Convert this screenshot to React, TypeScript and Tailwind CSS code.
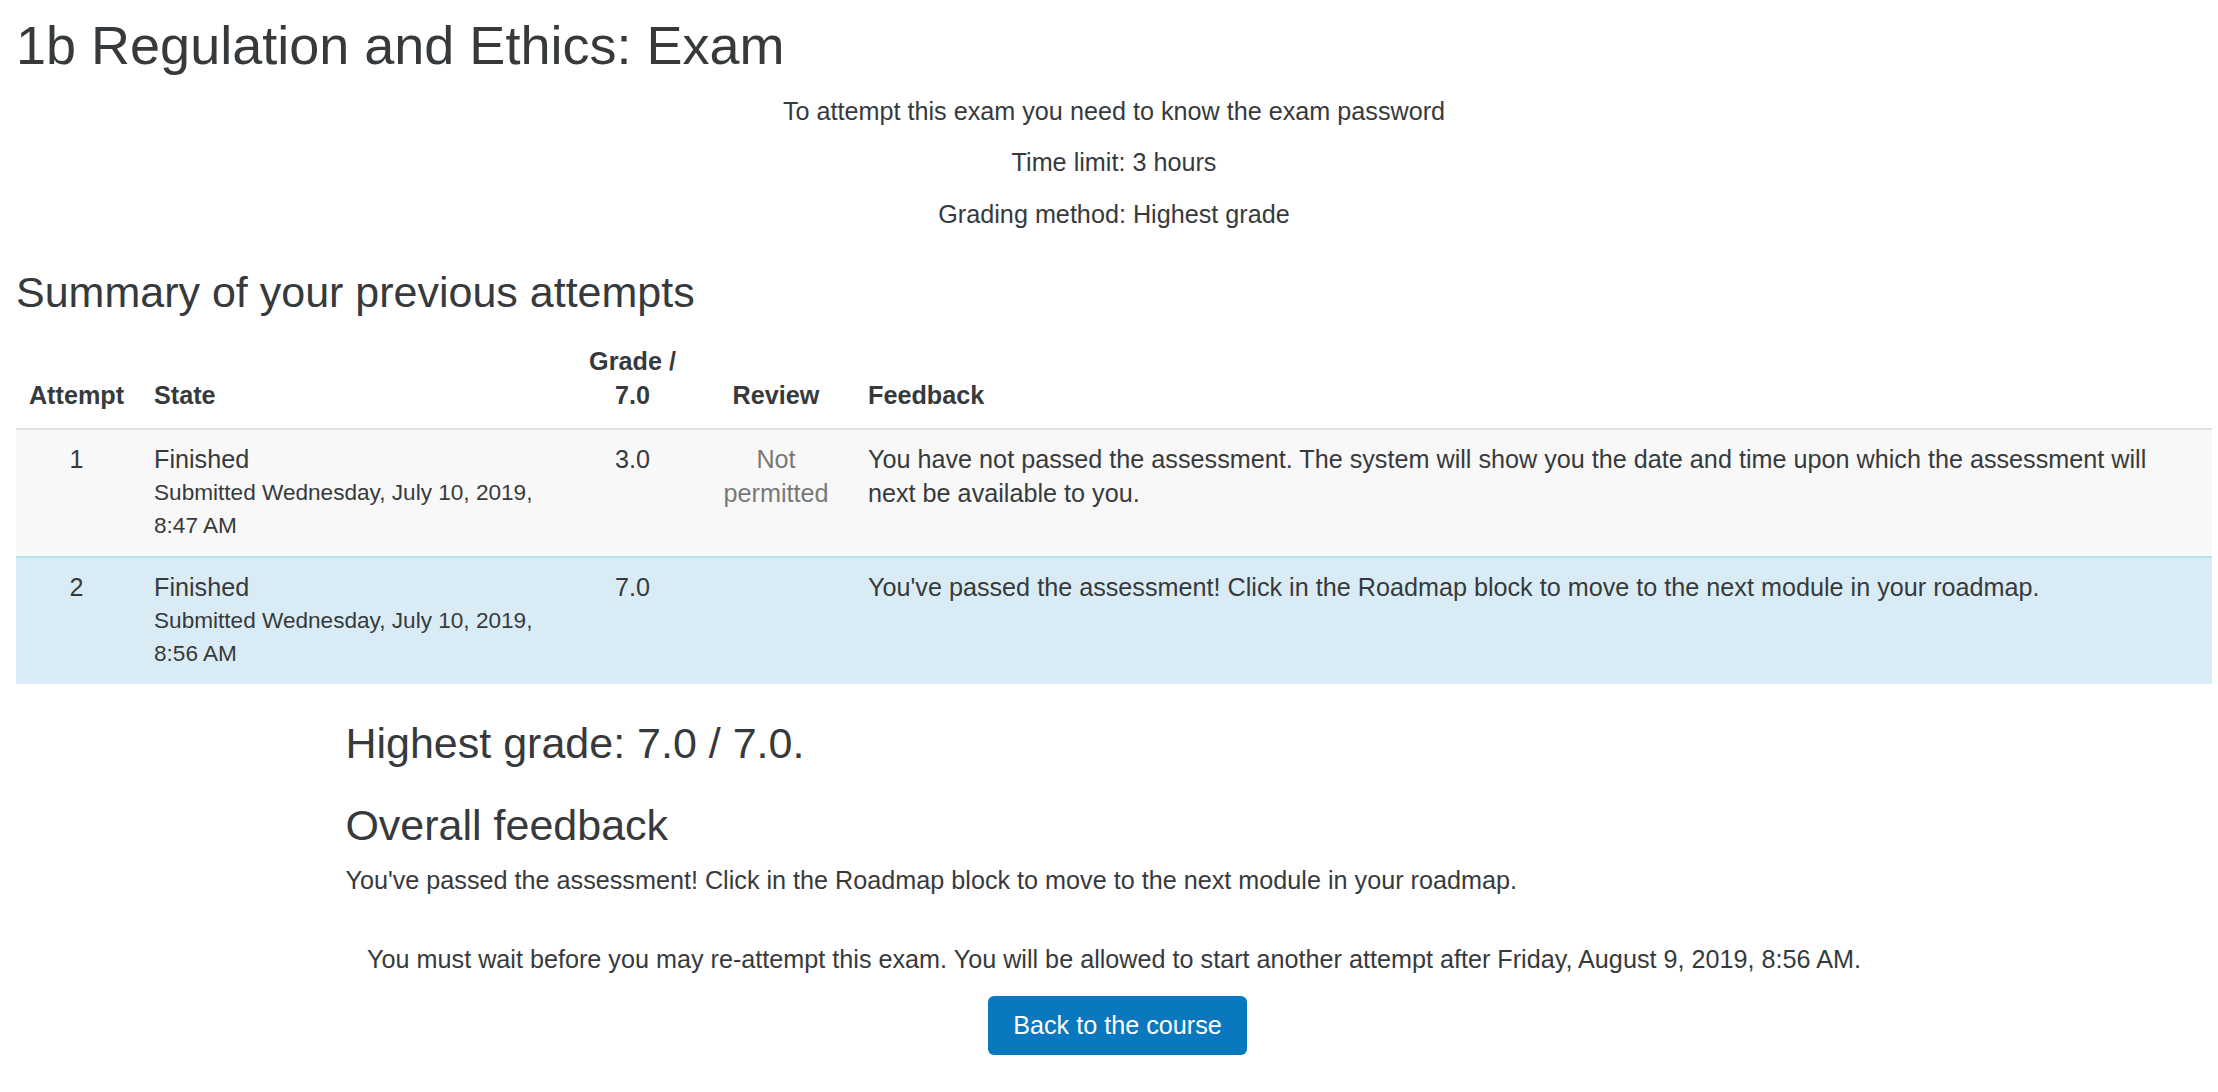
import React from "react";

export default function App() {
  return (
    <div className="min-h-screen bg-white pl-[16px] pr-[6px] font-['Liberation_Sans',Arial,sans-serif] text-[#373a3c]">
      <h1 className="pt-[13px] text-[54px] font-normal leading-[64px]">1b Regulation and Ethics: Exam</h1>

      <div className="mt-[17px] flex flex-col gap-[17.4px] text-center text-[25.2px] leading-[34px]">
        <p>To attempt this exam you need to know the exam password</p>
        <p>Time limit: 3 hours</p>
        <p>Grading method: Highest grade</p>
      </div>

      <h2 className="mt-[35px] text-[43px] font-normal leading-[52px]">Summary of your previous attempts</h2>

      <table className="mt-[14px] w-full table-fixed border-separate border-spacing-0 text-[25.2px] leading-[34px]">
        <colgroup>
          <col className="w-[121px]" />
          <col className="w-[438px]" />
          <col className="w-[115px]" />
          <col className="w-[161px]" />
          <col />
        </colgroup>
        <thead>
          <tr className="font-bold">
            <th className="border-b-2 border-[#dee2e6] px-[12px] pb-[16px] pt-[12px] text-center align-bottom">Attempt</th>
            <th className="border-b-2 border-[#dee2e6] pl-[17px] pb-[16px] pt-[12px] text-left align-bottom">State</th>
            <th className="border-b-2 border-[#dee2e6] px-[12px] pb-[16px] pt-[12px] text-center align-bottom">Grade / 7.0</th>
            <th className="border-b-2 border-[#dee2e6] pl-[23px] pr-[12px] pb-[16px] pt-[12px] text-center align-bottom">Review</th>
            <th className="border-b-2 border-[#dee2e6] pl-[17px] pr-[40px] pb-[16px] pt-[12px] text-left align-bottom">Feedback</th>
          </tr>
        </thead>
        <tbody>
          <tr className="bg-[#f8f8f8]">
            <td className="px-[12px] pb-[14px] pt-[12px] text-center align-top">1</td>
            <td className="pl-[17px] pb-[14px] pt-[12px] align-top">
              <div>Finished</div>
              <div className="text-[22.6px] leading-[33px]">Submitted Wednesday, July 10, 2019, 8:47 AM</div>
            </td>
            <td className="px-[12px] pb-[14px] pt-[12px] text-center align-top">3.0</td>
            <td className="pl-[23px] pr-[12px] pb-[14px] pt-[12px] text-center align-top text-[#787878]">Not permitted</td>
            <td className="pl-[17px] pr-[40px] pb-[14px] pt-[12px] align-top">
              You have not passed the assessment. The system will show you the date and time upon which the assessment will next be available to you.
            </td>
          </tr>
          <tr className="bg-[#d9ecf5]">
            <td className="border-t-2 border-[#b6e2ec] px-[12px] pb-[14px] pt-[12px] text-center align-top">2</td>
            <td className="border-t-2 border-[#b6e2ec] pl-[17px] pb-[14px] pt-[12px] align-top">
              <div>Finished</div>
              <div className="text-[22.6px] leading-[33px]">Submitted Wednesday, July 10, 2019, 8:56 AM</div>
            </td>
            <td className="border-t-2 border-[#b6e2ec] px-[12px] pb-[14px] pt-[12px] text-center align-top">7.0</td>
            <td className="border-t-2 border-[#b6e2ec] pl-[23px] pr-[12px] pb-[14px] pt-[12px] text-center align-top"></td>
            <td className="border-t-2 border-[#b6e2ec] pl-[17px] pr-[40px] pb-[14px] pt-[12px] align-top">
              You've passed the assessment! Click in the Roadmap block to move to the next module in your roadmap.
            </td>
          </tr>
        </tbody>
      </table>

      <div className="mx-auto w-[70%]">
        <h3 className="mt-[33px] text-[43px] font-normal leading-[52px]">Highest grade: 7.0 / 7.0.</h3>
        <h3 className="mt-[30px] text-[43px] font-normal leading-[52px]">Overall feedback</h3>
        <p className="mt-[12px] text-[25.2px] leading-[34px]">
          You've passed the assessment! Click in the Roadmap block to move to the next module in your roadmap.
        </p>
      </div>

      <p className="mt-[45px] text-center text-[25.2px] leading-[34px]">
        You must wait before you may re-attempt this exam. You will be allowed to start another attempt after Friday, August 9, 2019, 8:56 AM.
      </p>

      <div className="mt-[20px] flex justify-center pb-[37px] pl-[7px]">
        <button className="flex h-[59px] items-center rounded-[6px] bg-[#0a78be] px-[25px] text-[25.2px] leading-[34px] text-white">
          Back to the course
        </button>
      </div>
    </div>
  );
}
